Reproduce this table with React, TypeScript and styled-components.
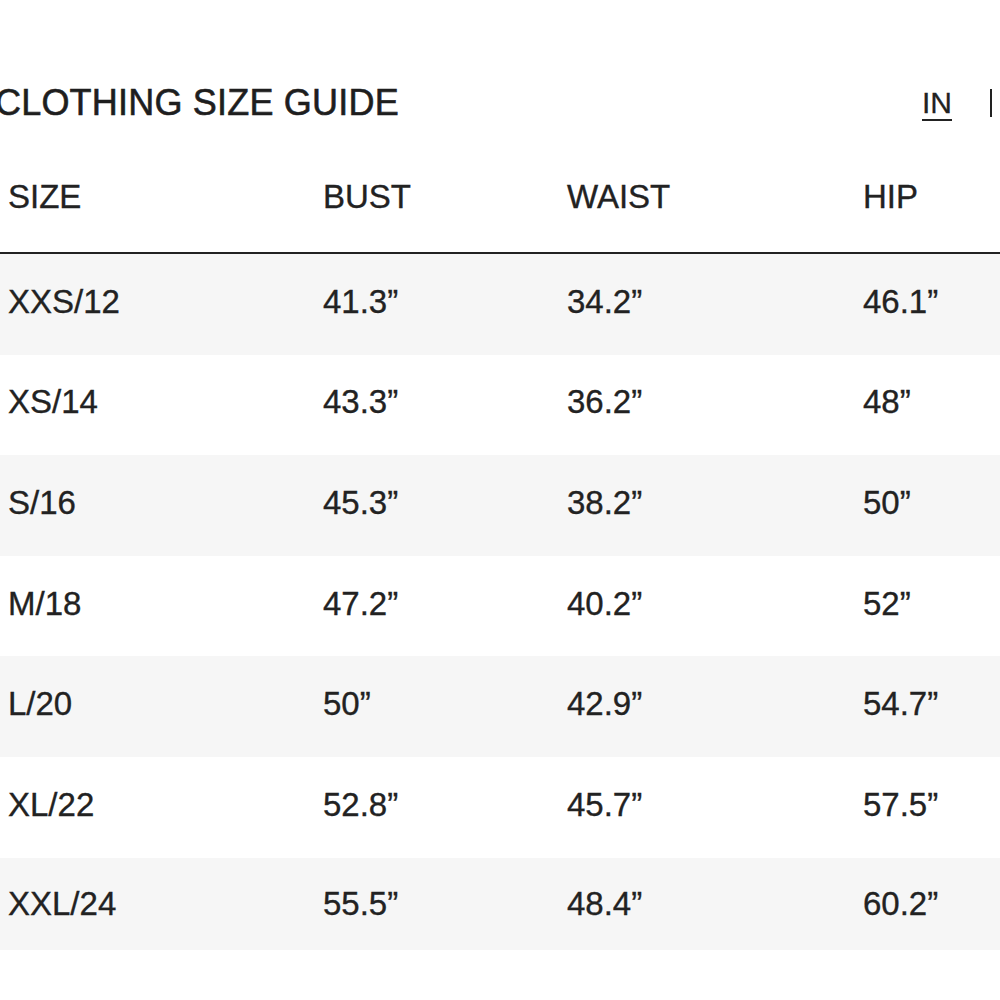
import React from "react";
import styled, { createGlobalStyle } from "styled-components";

const GlobalStyle = createGlobalStyle`
  html, body {
    margin: 0;
    padding: 0;
    background: #ffffff;
  }
  body {
    font-family: "Liberation Sans", Arial, sans-serif;
    color: #222222;
  }
`;

const Page = styled.div`
  width: 1000px;
  height: 1000px;
  overflow: hidden;
`;

const Header = styled.div`
  display: flex;
  align-items: center;
  justify-content: space-between;
  height: 46px;
  margin: 80px 0 0 -5px;
  white-space: nowrap;
`;

const Title = styled.h1`
  margin: 0;
  font-size: 36px;
  font-weight: 400;
  letter-spacing: 0.2px;
  color: #1e1e1e;
  -webkit-text-stroke: 0.6px #1e1e1e;
`;

const Units = styled.div`
  display: flex;
  align-items: center;
  gap: 38px;
  margin-right: 8px;
  font-size: 30px;
`;

const Unit = styled.span<{ $active?: boolean }>`
  text-decoration: ${(p) => (p.$active ? "underline" : "none")};
  text-underline-offset: 6px;
  text-decoration-thickness: 2px;
  color: #222;
  -webkit-text-stroke: 0.3px #222;
`;

const Divider = styled.span`
  width: 2px;
  height: 28px;
  background: #222;
`;

const Table = styled.div`
  margin-top: 20px;
  width: 1040px;
`;

const Row = styled.div<{ $head?: boolean; $shade?: boolean }>`
  display: grid;
  grid-template-columns: 315px 244px 296px 1fr;
  align-items: center;
  box-sizing: border-box;
  padding: ${(p) => (p.$head ? "0 0 4px 8px" : "0 0 5px 8px")};
  height: ${(p) => (p.$head ? "108px" : "100.6px")};
  background: ${(p) => (p.$shade ? "#f6f6f6" : "#ffffff")};
  border-bottom: ${(p) => (p.$head ? "2px solid #222" : "none")};
  font-size: 33px;
  -webkit-text-stroke: 0.35px #222;

  &:last-child {
    height: 92px;
    padding-bottom: 0;
  }
`;

const Cell = styled.div`
  white-space: nowrap;
`;

const rows = [
  ["XXS/12", "41.3”", "34.2”", "46.1”"],
  ["XS/14", "43.3”", "36.2”", "48”"],
  ["S/16", "45.3”", "38.2”", "50”"],
  ["M/18", "47.2”", "40.2”", "52”"],
  ["L/20", "50”", "42.9”", "54.7”"],
  ["XL/22", "52.8”", "45.7”", "57.5”"],
  ["XXL/24", "55.5”", "48.4”", "60.2”"],
];

const App = () => {
  return (
    <Page>
      <GlobalStyle />
      <Header>
        <Title>CLOTHING SIZE GUIDE</Title>
        <Units>
          <Unit $active>IN</Unit>
          <Divider />
        </Units>
      </Header>
      <Table>
        <Row $head>
          <Cell>SIZE</Cell>
          <Cell>BUST</Cell>
          <Cell>WAIST</Cell>
          <Cell>HIP</Cell>
        </Row>
        {rows.map((r, i) => (
          <Row key={r[0]} $shade={i % 2 === 0}>
            {r.map((c) => (
              <Cell key={c}>{c}</Cell>
            ))}
          </Row>
        ))}
      </Table>
    </Page>
  );
};

export default App;
